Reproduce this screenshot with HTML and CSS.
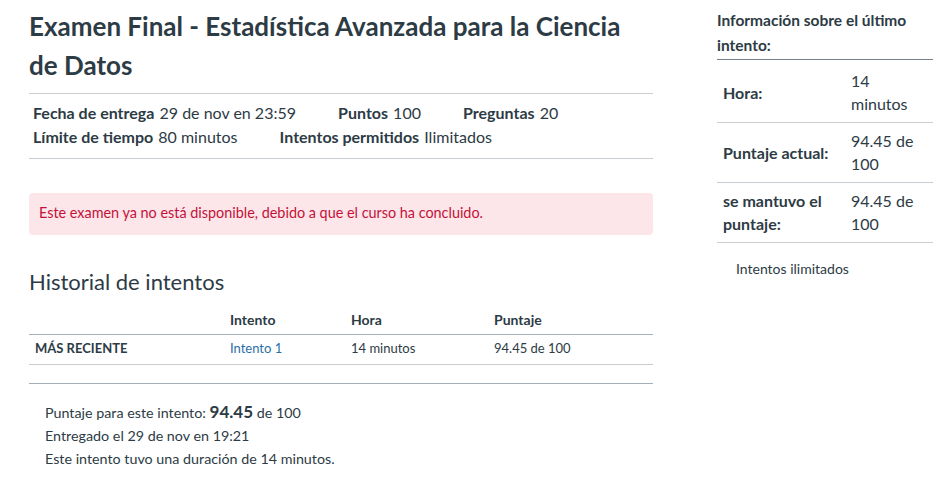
FILE: index.html
```html
<!DOCTYPE html>
<html lang="es">
<head>
<meta charset="utf-8">
<title>Examen Final</title>
<link rel="stylesheet" href="styles.css">
</head>
<body>
<div class="page">
  <main class="main">
    <h1 class="title">Examen Final - Estadística Avanzada para la Ciencia de Datos</h1>
    <div class="details">
      <div class="drow">
        <span class="item"><b>Fecha de entrega</b> 29 de nov en 23:59</span>
        <span class="item"><b>Puntos</b> 100</span>
        <span class="item"><b>Preguntas</b> 20</span>
      </div>
      <div class="drow">
        <span class="item"><b>Límite de tiempo</b> 80 minutos</span>
        <span class="item"><b>Intentos permitidos</b> Ilimitados</span>
      </div>
    </div>
    <div class="alert">Este examen ya no está disponible, debido a que el curso ha concluido.</div>
    <h2 class="hist-title">Historial de intentos</h2>
    <table class="hist">
      <thead>
        <tr><th class="c1"></th><th class="c2">Intento</th><th class="c3">Hora</th><th class="c4">Puntaje</th></tr>
      </thead>
      <tbody>
        <tr><td class="c1 recent">MÁS RECIENTE</td><td class="c2"><a href="#" class="link">Intento 1</a></td><td class="c3">14 minutos</td><td class="c4">94.45 de 100</td></tr>
      </tbody>
    </table>
    <hr class="sep">
    <div class="summary">
      <div class="sline">Puntaje para este intento: <span class="score">94.45</span> de 100</div>
      <div class="sline">Entregado el 29 de nov en 19:21</div>
      <div class="sline">Este intento tuvo una duración de 14 minutos.</div>
    </div>
  </main>
  <aside class="side">
    <h3 class="side-title">Información sobre el último intento:</h3>
    <table class="info">
      <tr class="first"><th>Hora:</th><td>14 minutos</td></tr>
      <tr><th>Puntaje actual:</th><td>94.45 de 100</td></tr>
      <tr><th>se mantuvo el puntaje:</th><td>94.45 de 100</td></tr>
    </table>
    <div class="unlimited">Intentos ilimitados</div>
  </aside>
</div>
</body>
</html>
```

FILE: styles.css
```css
* { box-sizing: border-box; }
html, body { margin: 0; padding: 0; background: #fff; }
body {
  font-family: Lato, "Open Sans", "Liberation Sans", sans-serif;
  color: #2d3b45;
}
.page {
  display: flex;
  padding: 0 9px 0 29px;
  gap: 64px;
}
.main { width: 624px; flex: none; }
.side { width: 216px; flex: none; }

.title {
  font-size: 26px;
  font-weight: 700;
  line-height: 39px;
  margin: 7px 0 0;
  padding-bottom: 8px;
  border-bottom: 1px solid #c7cdd1;
}
.details {
  padding: 7px 4px 9px;
  border-bottom: 1px solid #c7cdd1;
  font-size: 16px;
  line-height: 24px;
}
.drow { white-space: nowrap; }
.item { display: inline-block; margin-right: 38px; font-weight: 400; color: #2d3b45; }
.item b { font-weight: 700; margin-right: 1px; }

.alert {
  margin-top: 34px;
  background: #fde6e9;
  border-radius: 4px;
  color: #c4113a;
  font-size: 14.4px;
  line-height: 20px;
  padding: 10px 10px 12px;
}
.hist-title {
  font-size: 22px;
  font-weight: 400;
  line-height: 28px;
  margin: 33px 0 0;
}
.hist {
  width: 100%;
  border-collapse: collapse;
  margin-top: 8px;
  font-size: 13px;
}
.hist th {
  text-align: left;
  font-size: 14px;
  font-weight: 700;
  line-height: 20px;
  padding: 6px 6px 4px;
  border-bottom: 1px solid #a5afb5;
}
.hist td {
  line-height: 18px;
  padding: 4px 6px 7px;
  border-bottom: 1px solid #c7cdd1;
}
.hist .c1 { width: 195px; }
.hist .c2 { width: 121px; }
.hist .c3 { width: 143px; }
.recent { font-weight: 700; }
.link { color: #2a6fa8; text-decoration: none; }
.sep {
  border: 0;
  border-top: 1px solid #a5afb5;
  margin: 18px 0 0;
}
.summary {
  padding: 16px 16px 0;
  font-size: 14.3px;
  line-height: 23px;
}
.score { font-size: 17px; font-weight: 700; }

.side-title {
  font-size: 15.5px;
  font-weight: 700;
  line-height: 25px;
  margin: 8px 0 0;
  padding-bottom: 1px;
  border-bottom: 1px solid #73818c;
}
.info {
  width: 100%;
  border-collapse: collapse;
  font-size: 16px;
}
.info th, .info td {
  line-height: 23px;
  padding-top: 6px;
  padding-bottom: 7px;
  border-bottom: 1px solid #c7cdd1;
}
.info th {
  text-align: left;
  font-weight: 700;
  width: 134px;
  padding-left: 6px;
  padding-right: 6px;
}
.info td {
  font-weight: 400;
  padding-left: 0;
  padding-right: 8px;
}
.info .first th, .info .first td { padding-top: 9px; }
.unlimited {
  font-size: 14px;
  padding: 16px 19px;
  line-height: 20px;
}
```
